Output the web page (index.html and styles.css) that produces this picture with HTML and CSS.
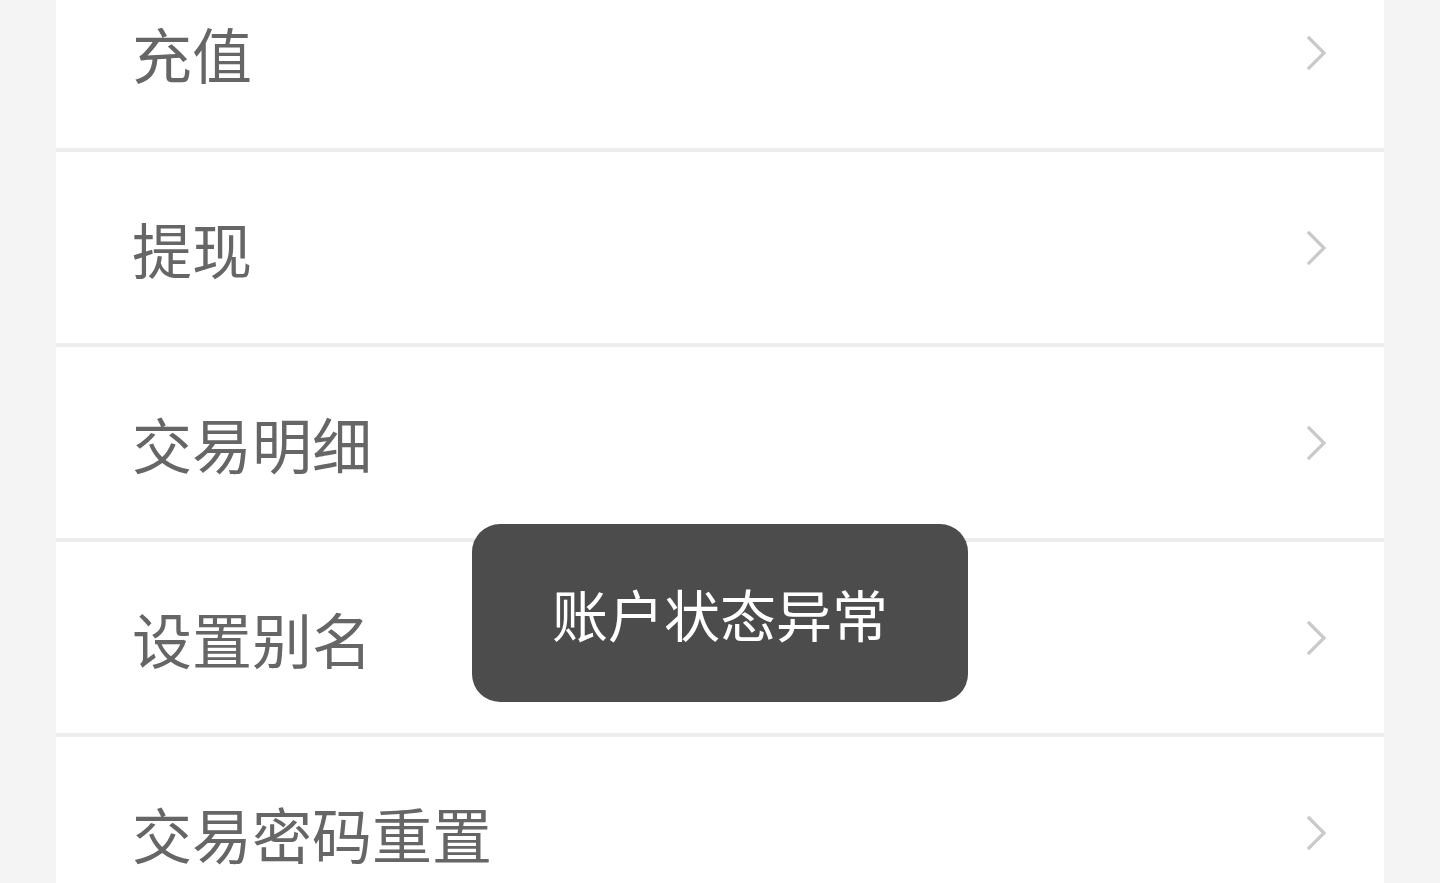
FILE: index.html
```html
<!DOCTYPE html>
<html lang="zh-CN">
<head>
<meta charset="utf-8">
<title>账户</title>
<link rel="stylesheet" href="styles.css">
</head>
<body>
<div class="page">
  <ul class="menu">
    <li class="row"><span class="label">充值</span><svg class="chev" viewBox="0 0 22 36"><path d="M3 3 L18 18 L3 33"/></svg></li>
    <li class="row"><span class="label">提现</span><svg class="chev" viewBox="0 0 22 36"><path d="M3 3 L18 18 L3 33"/></svg></li>
    <li class="row"><span class="label">交易明细</span><svg class="chev" viewBox="0 0 22 36"><path d="M3 3 L18 18 L3 33"/></svg></li>
    <li class="row"><span class="label">设置别名</span><svg class="chev" viewBox="0 0 22 36"><path d="M3 3 L18 18 L3 33"/></svg></li>
    <li class="row"><span class="label">交易密码重置</span><svg class="chev" viewBox="0 0 22 36"><path d="M3 3 L18 18 L3 33"/></svg></li>
  </ul>
  <div class="toast">账户状态异常</div>
</div>
</body>
</html>
```
FILE: styles.css
```css
html, body {
  margin: 0;
  padding: 0;
  height: 100%;
  overflow: hidden;
  background: #f4f4f4;
  font-family: "Noto Sans CJK SC", "Noto Sans", sans-serif;
}
.page {
  position: relative;
  display: flow-root;
  height: 883px;
  padding: 0 56px;
}
.menu {
  list-style: none;
  margin: -43px 0 0;
  padding: 0;
  background: #ededed;
  display: flex;
  flex-direction: column;
  gap: 4px;
}
.row {
  height: 191px;
  background: #ffffff;
  display: flex;
  align-items: center;
  justify-content: space-between;
  padding: 0 56px 0 76px;
}
.label {
  font-size: 60px;
  color: #666666;
  line-height: 1;
}
.chev {
  width: 22px;
  height: 36px;
  fill: none;
  stroke: #c9c9c9;
  stroke-width: 3.2;
  stroke-linecap: square;
}
.toast {
  position: absolute;
  left: 472px;
  top: 524px;
  width: 496px;
  height: 178px;
  border-radius: 28px;
  background: #4c4c4c;
  color: #ffffff;
  font-size: 56px;
  display: flex;
  align-items: center;
  justify-content: center;
  line-height: 1;
}
```
